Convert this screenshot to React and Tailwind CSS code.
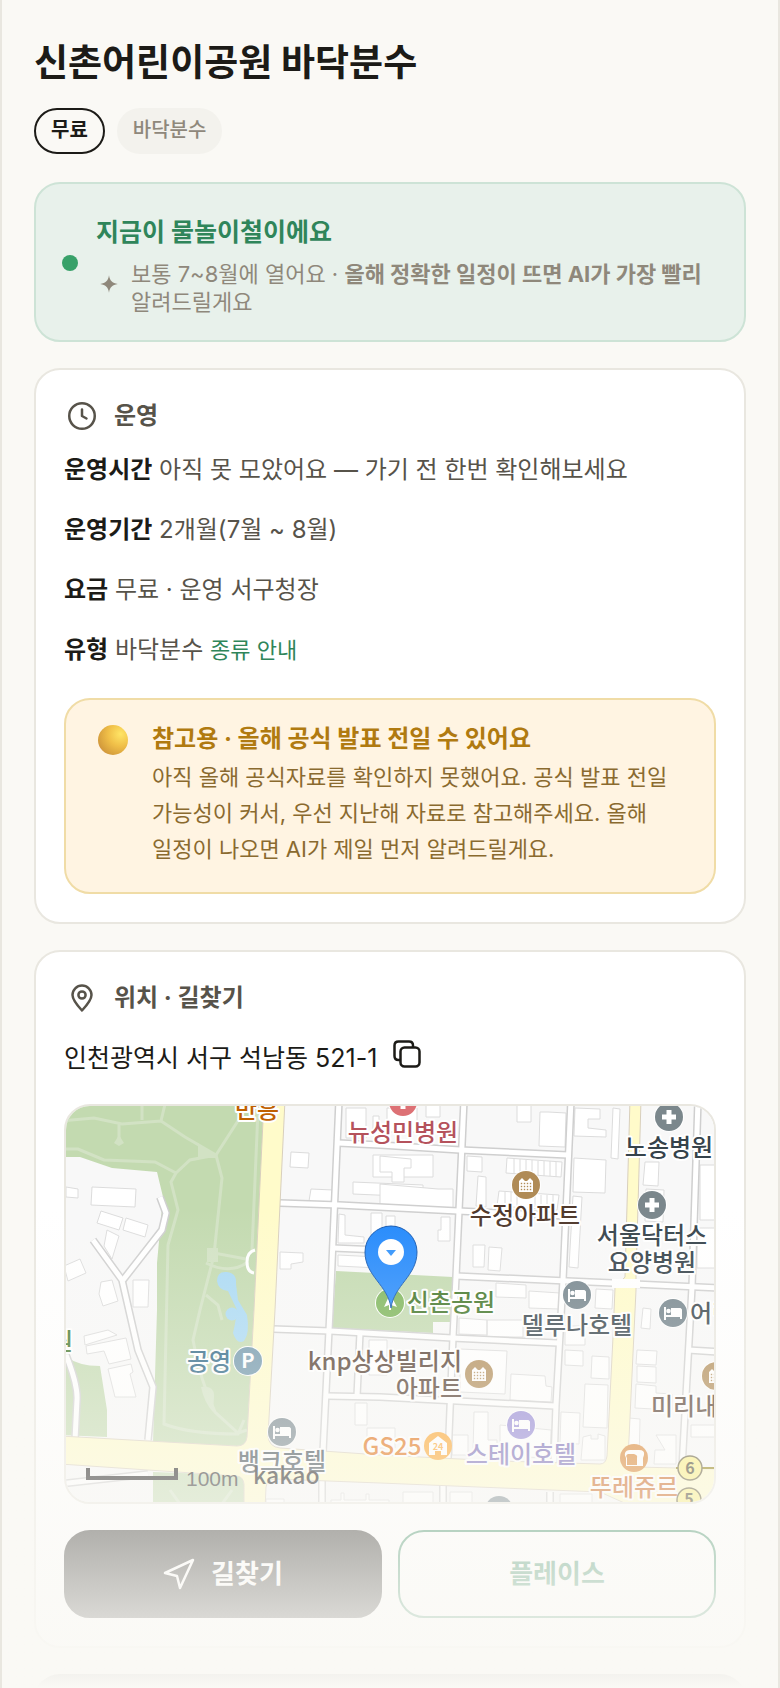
import React from "react";

const HOSPITAL = "#7b878c";
const HOTEL = "#74848c";
const HOUSE = "#b08b56";

function Halo({ x, y, fill, size = 24, anchor = "middle", children }) {
  return (
    <text
      x={x}
      y={y}
      fill={fill}
      fontSize={size}
      fontWeight="500"
      textAnchor={anchor}
      stroke="#ffffff"
      strokeWidth="4"
      strokeLinejoin="round"
      paintOrder="stroke"
    >
      {children}
    </text>
  );
}

function Cross({ x, y, fill }) {
  return (
    <g transform={`translate(${x} ${y})`}>
      <circle r="15" fill="#fff" />
      <circle r="14" fill={fill} />
      <path d="M-2.5-7h5v4.500h4.500v5h-4.500v4.500h-5v-4.500h-4.500v-5h4.500z" fill="#fff" />
    </g>
  );
}

function Bed({ x, y, fill }) {
  return (
    <g transform={`translate(${x} ${y})`}>
      <circle r="15" fill="#fff" />
      <circle r="14" fill={fill} />
      <path d="M-9-6h2v8H7v-5H-2v-2H6q3 0 3 3v8H7V4H-7v3h-2z" fill="#fff" />
      <path d="M-2-5H6q3 0 3 3v4H-2z" fill="#fff" />
      <circle cx="-4.500" cy="-2" r="2.300" fill="#fff" />
    </g>
  );
}

function Apartment({ x, y, fill = HOUSE }) {
  const dots = [-4.500, -1.500, 1.500, 4.500];
  return (
    <g transform={`translate(${x} ${y})`}>
      <circle r="15" fill="#fff" />
      <circle r="14" fill={fill} />
      <path d="M-7 7V-4l3-3 3 3h2l3-3 3 3V7z" fill="#fff" />
      {dots.map((cx) =>
        [-1.500, 1.500, 4.500].map((cy) => (
          <rect key={`${cx}${cy}`} x={cx - 0.700} y={cy - 0.700} width="1.400" height="1.400" fill={fill} />
        ))
      )}
    </g>
  );
}

const minorRoads = [
  "M339 1100L330 1310L323 1452",
  "M464 1100L456 1277L453 1337L448 1458",
  "M571 1100L563 1280L556 1405L554 1462",
  "M698 1100L692 1287L682 1468",
  "M280 1203L339 1205L458 1211L566 1216",
  "M338 1143L380 1145L460 1150L568 1155",
  "M333 1248L380 1250",
  "M456 1276L567 1281L613 1283L720 1288",
  "M273 1329L330 1331L452 1338L558 1343",
  "M327 1396L380 1397L555 1406",
  "M360 1333L357 1396",
  "M688 1350L720 1352",
  "M160 1197L166 1213L162 1230L123 1280",
  "M93 1240L122 1280L138 1350L153 1387L148 1440",
  "M66 1355Q78 1385 77 1400L75 1440",
  "M322 1480V1510M443 1485V1510M550 1492V1510",
  "M60 1484L148 1474",
];

const buildings = [
  "M92 1187l44 2-1 18-44-2zM101 1211l22 7-4 12-22-7zM126 1218l22 7-3 12-22-7zM107 1230l12 6-7 23-8-13zM66 1187l12 2-0 9-12-1zM64 1266l16-7 6 14-18 8z",
  "M133 1280h16l-1 27h-15zM101 1282l11-2 6 21-15 5-4-12zM84 1336l24-6 9 5-32 10zM86 1346l40-8 5 21-22 5-5-13-17 3zM108 1369l23-5 2 8-3 2 6 23-21 0z",
  "M291 1152l18 1-1 15-18-1zM311 1189l22 1-2 13-22-2zM280 1252l23 1v9l-12 2v5h-11z",
  "M373 1155h60v22h-60zM353 1182l70 3v12l-70-3zM339 1214l6 1v20l19 2v6h-26zM338 1255l40 2v11l-40-2zM371 1213h11v24h-11zM386 1216h9v22h-9z",
  "M346 1108h20v30h-20zM373 1116h6v20h-6zM387 1108h30v24h-30zM426 1102h14v15h-14zM517 1102h14v20h-14zM548 1112l18 1-1 34-26-1 1-34z",
  "M380 1156l31 3v9h-7v14h-12v-10h-12zM380 1184l58 5h15v22l-60-3-13-2zM467 1156l15 1v15l-15-1zM478 1176l8 1v30l-10-1zM441 1217h9v24h-12v-11h3z",
  "M473 1245h12l-1 22h-11zM489 1247l13 1-2 23-12-1zM573 1196l9 1-4 71-9-1zM574 1158l32 2-1 33-32-1zM575 1108l25 1v10h-12v9l18 2v7l-32-1z",
  "M613 1108l7 1-2 50-7-1zM645 1162h14l-1 24-15-1zM646 1189l18 1-1 32-18-1zM700 1165h20v55h-20zM697 1228h20v40h-20z",
  "M459 1318l28 2v15l-28-1zM487 1320h36v17h-36zM496 1283l30 2v13l-30-1zM529 1291l31 2-1 16-30-1zM596 1289l17 1-1 19-17-1zM643 1308l8 1-1 20-9-1z",
  "M460 1349l47 2-2 43-45-2zM511 1374l34 2 1 10 6 1-1 15-41-2zM565 1326h20v19h-20zM565 1350l18 1v15l-18-1zM592 1356l17 1v22l-18-1zM585 1384l23 1-1 43-24-1z",
  "M637 1350l20 1-1 14-20-1zM637 1366l19 1v16l-19-1zM636 1384l20 2v7l16 1v16l-37-2zM629 1418l11 1-1 42-11-1zM656 1435h20v29h-22l1-14h10zM691 1425h25v12h-25z",
  "M561 1412l19 1-1 31-19-1zM474 1412h14v28h9v14l-24-1zM500 1425l51 5-1 28-50-2zM369 1340h18v35h-18zM355 1403h12v22h-12zM367 1428h28v20h-28zM452 1435h16v20h-16zM583 1437l8-2v4h7v-5l7 2v24h-24z",
  "M403 1492h30v14h-30zM450 1492h22v14h-22zM560 1494h32v14h-32zM266 1499h18v10h-18zM331 1500h10v-7h3v7h22v-6h3v6h20v9h-58z",
  "M507 1158l55 4-1 15-55-4zM499 1191l60 4-2 15-60-4z",
];

function MapPicture() {
  return (
    <svg
      viewBox="66 1106 648 396"
      preserveAspectRatio="xMidYMid slice"
      className="block w-full font-['Noto_Sans_CJK_KR',sans-serif]"
      role="img"
      aria-label="신촌어린이공원 지도"
    >
      <rect x="60" y="1100" width="660" height="410" fill="#f8f8f8" />
      <g fill="#c3dab0">
        <path d="M60 1100H264L254 1310L247 1437Q246 1446 237 1446L153 1442L157 1310V1263L163 1197L157 1172L112 1168L80 1157H60z" />
        <path d="M60 1350Q72 1366 100 1366L107 1410V1437L60 1435z" />
        <path d="M153 1472L236 1475Q244 1476 244 1484V1510H153z" />
        <path d="M336 1271L453 1277L450 1322H433V1333L332 1328z" />
      </g>
      <g fill="none" stroke="#d2e2c4" strokeWidth="3">
        <path d="M60 1121L94 1118L122 1124L161 1121L185 1137L216 1155L243 1113M142 1100V1120M166 1100L161 1121M119 1124V1142" />
        <path d="M60 1149H78L104 1160L155 1162L176 1173L190 1160L216 1155L222 1178L214 1255L200 1310L193 1340Q200 1380 215 1412L238 1433L247 1430M176 1173L171 1182L178 1210L168 1245L164 1424Q190 1434 238 1434L244 1420" />
        <path d="M214 1253L246 1259M206 1263Q230 1275 248 1262M258 1110L252 1250M206 1295L218 1305L222 1320M170 1490L180 1504M232 1490L222 1504" />
      </g>
      <g fill="#d2e2c4">
        <path d="M198 1143L217 1158H198zM207 1248h11v14h-11zM119 1135l5 8-5 3-5-3zM201 1387q14-2 13 10l-1 15q-9-10-12-25z" />
      </g>
      <g fill="#a9d9f4">
        <path d="M217 1281Q217 1271 227 1272Q237 1273 236 1284L238 1300L247 1315Q250 1333 244 1341Q237 1345 233 1333Q236 1320 237 1310L228 1291Q218 1290 217 1281z" />
        <circle cx="232" cy="1314" r="6.500" />
      </g>
      <g fill="#ffffff" stroke="#dcdcdc" strokeWidth="1">
        {buildings.map((d) => (
          <path key={d} d={d} />
        ))}
      </g>
      <path
        d="M514 1159v15M520 1159v15M526 1160v15M532 1160v15M538 1161v15M544 1161v15M550 1161v15M556 1162v15M505 1192v13M511 1192v13M517 1193v13M535 1194v13M541 1195v13M547 1195v13M553 1195v13"
        stroke="#dcdcdc"
      />
      <g fill="none" strokeLinejoin="round">
        {minorRoads.map((d) => (
          <path key={d} d={d} stroke="#cfcfcf" strokeWidth="8" />
        ))}
        {minorRoads.map((d) => (
          <path key={d} d={d} stroke="#ffffff" strokeWidth="5" />
        ))}
      </g>
      <path d="M255 1250Q247 1252 247 1262T254 1273" fill="none" stroke="#fff" strokeWidth="3" />
      <g fill="#fffbca" stroke="#d8cfbd" strokeWidth="1">
        <path d="M264 1100H285L275 1310L268 1436Q269 1447 280 1448L380 1455L500 1461L600 1464Q606 1464 607 1456L613 1337L615 1288L625 1277L630 1100H641L636 1277V1290L628 1460Q629 1466 636 1467L720 1469V1510H640L600 1492L380 1483L276 1479Q267 1479 266 1487L265 1510H244V1484Q243 1476 236 1476L60 1464V1436L237 1446Q246 1446 247 1437L254 1310z" />
      </g>
      <path d="M676 1468H720" stroke="#887700" strokeWidth="2" />
      <path d="M612 1279h28v9h-28z" fill="#fff" />

      <Cross x={403} y={1102} fill="#dd7175" />
      <Cross x={669} y={1117} fill={HOSPITAL} />
      <Cross x={652} y={1205} fill={HOSPITAL} />
      <Apartment x={526} y={1185} />
      <Apartment x={479} y={1374} />
      <Apartment x={716} y={1376} />
      <Bed x={577} y={1295} fill={HOTEL} />
      <Bed x={673} y={1313} fill={HOTEL} />
      <Bed x={282} y={1432} fill={HOTEL} />
      <Bed x={521} y={1425} fill="#9285d5" />
      <circle cx="499" cy="1510" r="14" fill={HOTEL} />

      <circle cx="248" cy="1361" r="15" fill="#fff" />
      <circle cx="248" cy="1361" r="14" fill="#6e95aa" />
      <text x="248" y="1368" fontSize="20" fontWeight="700" fill="#fff" textAnchor="middle">P</text>

      <circle cx="438" cy="1446" r="14" fill="#fca123" />
      <path d="M429 1455V1443L438 1436L447 1443V1455H441V1451H435V1455z" fill="#fff" />
      <text x="438" y="1450" fontSize="9" fontWeight="700" fill="#fca123" textAnchor="middle">24</text>

      <circle cx="634" cy="1458" r="14" fill="#d77c23" />
      <path d="M630 1450h9q6 0 5 5l-1 3v8h-17v-8q-2-3-1-5 1-3 5-3z" fill="#fff" />
      <path d="M628 1454h6q4 1 3 4v7h-10v-7q-2-3 1-4z" fill="#d77c23" />

      <circle cx="390" cy="1303" r="15" fill="#fff" />
      <circle cx="390" cy="1303" r="14" fill="#7db55a" />
      <path d="M384 1307L390 1294L397 1307L391 1305V1310H389V1305z" fill="#fff" />

      <Halo x={257} y={1118} fill="#c06000">반흥</Halo>
      <Halo x={403} y={1141} fill="#b5525c">뉴성민병원</Halo>
      <Halo x={669} y={1156} fill="#36434b">노송병원</Halo>
      <Halo x={525} y={1224} fill="#4f382b">수정아파트</Halo>
      <Halo x={652} y={1244} fill="#36434b">서울닥터스</Halo>
      <Halo x={652} y={1271} fill="#36434b">요양병원</Halo>
      <Halo x={451} y={1311} fill="#3f7426">신촌공원</Halo>
      <Halo x={577} y={1334} fill="#36434b">델루나호텔</Halo>
      <Halo x={690} y={1322} fill="#36434b" anchor="start">어린이집</Halo>
      <Halo x={73} y={1350} fill="#3f7426" anchor="end">공원</Halo>
      <Halo x={209} y={1370} fill="#266182">공영</Halo>
      <Halo x={462} y={1370} fill="#4f382b" anchor="end">knp상상빌리지</Halo>
      <Halo x={462} y={1397} fill="#4f382b" anchor="end">아파트</Halo>
      <Halo x={651} y={1415} fill="#4f382b" anchor="start">미리내아파트</Halo>
      <Halo x={282} y={1470} fill="#36434b">뱅크호텔</Halo>
      <Halo x={392} y={1455} fill="#e06a08">GS25</Halo>
      <Halo x={521} y={1463} fill="#7365b5">스테이호텔</Halo>
      <Halo x={634} y={1496} fill="#c85c10">뚜레쥬르</Halo>

      <g fill="#fbef7c" stroke="#5c5430" strokeWidth="1.500">
        <circle cx="690" cy="1468" r="12" />
        <circle cx="689" cy="1500" r="12" />
      </g>
      <g fontSize="16" fontWeight="700" fill="#3a3418" textAnchor="middle">
        <text x="690" y="1474">6</text>
        <text x="689" y="1505">5</text>
      </g>

      <path
        d="M391 1308C388 1285 365 1276 365 1252A26 26 0 0 1 417 1252C417 1276 394 1285 391 1308z"
        fill="#2389fc"
        stroke="#1257b0"
        strokeWidth="1"
      />
      <circle cx="391" cy="1252" r="13" fill="#fff" />
      <path d="M386 1250H396L391 1256z" fill="#2f92fc" />

      <path d="M88 1468V1478H176V1468" fill="none" stroke="#111" strokeWidth="4" />
      <text x="186" y="1486" fontSize="21" fill="#222" fontFamily="Liberation Sans, sans-serif">100m</text>
      <text x="253" y="1484" fontSize="23" fontWeight="500" fill="#111">kakao</text>
    </svg>
  );
}

function SectionTitle({ icon, children }) {
  return (
    <h2 className="flex items-center gap-[14px] text-2xl leading-9 font-bold text-[#57534a]">
      <span className="flex w-9 justify-center">{icon}</span>
      {children}
    </h2>
  );
}

function Fact({ label, children }) {
  return (
    <p className="text-[#57534a]">
      <b className="font-bold text-[#1c1b17]">{label}</b> {children}
    </p>
  );
}

const card = "rounded-[26px] border-2 border-[#e9e7e0] bg-white p-7";

export default function App() {
  return (
    <div className="relative mx-auto h-screen max-w-[780px] overflow-hidden border-x-2 border-[#e9e7e0] bg-[#faf9f5] px-8 pt-9 font-[Inter,'Noto_Sans_CJK_KR',sans-serif] break-keep text-[#1c1b17]">
      <header>
        <h1 className="text-[37px] leading-[54px] font-bold">신촌어린이공원 바닥분수</h1>
        <div className="mt-[18px] flex gap-3 text-xl leading-6 font-medium">
          <span className="rounded-full border-2 border-[#1c1b17] px-[15px] pt-2 pb-[10px] font-bold">무료</span>
          <span className="rounded-full border-2 border-[#f3f2ed] bg-[#f3f2ed] px-[14px] pt-2 pb-[10px] text-[#8f887b]">바닥분수</span>
        </div>
      </header>

      <main className="mt-7 flex flex-col gap-[26px]">
        <section className="flex items-center gap-[18px] rounded-[26px] border-2 border-[#cde3d6] bg-[#e8f1eb] px-[26px] pt-[26px] pb-6">
          <span className="size-4 shrink-0 rounded-full bg-[#38a169]" />
          <div className="flex-1">
            <h2 className="text-[25px] leading-[44px] font-bold text-[#2f855a]">지금이 물놀이철이에요</h2>
            <div className="mt-[6px] flex items-center gap-3">
              <svg viewBox="0 0 16 16" className="mb-2 ml-[3px] size-5 shrink-0 fill-[#8f887b]" aria-hidden="true">
                <path d="M8 1C8.700 5.500 10.500 7.200 15 8C10.500 8.800 8.700 10.500 8 15C7.300 10.500 5.500 8.800 1 8C5.500 7.200 7.300 5.500 8 1z" />
              </svg>
              <p className="text-[22px] leading-7 text-[#8f887b]">
                보통 7~8월에 열어요 · <b className="font-bold">올해 정확한 일정이 뜨면 AI가 가장 빨리</b> 알려드릴게요
              </p>
            </div>
          </div>
        </section>

        <section className={card}>
          <SectionTitle
            icon={
              <svg viewBox="0 0 28 28" className="size-7 fill-none stroke-[#57534a] stroke-[2.5]" strokeLinecap="round" strokeLinejoin="round" aria-hidden="true">
                <circle cx="14" cy="14" r="12.750" />
                <path d="M14 7.500V14L18.500 16.500" />
              </svg>
            }
          >
            운영
          </SectionTitle>
          <div className="mt-4 flex flex-col gap-5 text-2xl leading-10">
            <Fact label="운영시간">아직 못 모았어요 — 가기 전 한번 확인해보세요</Fact>
            <Fact label="운영기간">2개월(7월 ~ 8월)</Fact>
            <Fact label="요금">무료 · 운영 서구청장</Fact>
            <Fact label="유형">
              바닥분수 <a href="#types" className="text-[22px] text-[#2f855a]">종류 안내</a>
            </Fact>
          </div>
          <aside className="mt-7 flex items-start gap-[24px] rounded-[26px] border-2 border-[#f0dca6] bg-[#fff4e2] pt-[21px] pr-9 pb-[25px] pl-8">
            <span className="mt-1 size-[30px] shrink-0 rounded-full bg-[radial-gradient(circle_at_75%_30%,#ffe566,#f0bf48_40%,#d49c3c_75%,#cf7a62)]" />
            <div>
              <h3 className="text-2xl leading-9 font-bold text-[#b07a10]">참고용 · 올해 공식 발표 전일 수 있어요</h3>
              <p className="mt-[2px] text-[22px] leading-9 text-[#8a6a2f]">
                아직 올해 공식자료를 확인하지 못했어요. 공식 발표 전일 가능성이 커서, 우선 지난해 자료로 참고해주세요. 올해 일정이 나오면 AI가 제일 먼저 알려드릴게요.
              </p>
            </div>
          </aside>
        </section>

        <section className={card}>
          <SectionTitle
            icon={
              <svg viewBox="0 0 28 28" className="size-7 fill-none stroke-[#57534a] stroke-[2.5]" strokeLinejoin="round" aria-hidden="true">
                <path d="M14 26.500C8 20 4.500 15.500 4.500 11A9.500 9.500 0 0 1 23.500 11C23.500 15.500 20 20 14 26.500z" />
                <circle cx="14" cy="11" r="3.600" />
              </svg>
            }
          >
            위치 · 길찾기
          </SectionTitle>
          <div className="mt-[22px] flex items-center gap-4">
            <p className="text-[25px] leading-10">인천광역시 서구 석남동 521-1</p>
            <button type="button" aria-label="주소 복사" className="pb-2">
              <svg viewBox="0 0 28 28" className="size-7 fill-none stroke-[#1c1b17] stroke-[2.5]" strokeLinejoin="round" aria-hidden="true">
                <rect x="7.500" y="7.500" width="19" height="19" rx="4" />
                <path d="M7.500 20H5.500Q1.500 20 1.500 16V5.500Q1.500 1.500 5.500 1.500H16Q20 1.500 20 5.500V7.500" />
              </svg>
            </button>
          </div>
          <div className="mt-[26px] overflow-hidden rounded-[26px] border-2 border-[#e9e7e0]">
            <MapPicture />
          </div>
          <div className="mt-[26px] flex gap-4 text-[26px] leading-10 font-bold">
            <button type="button" className="flex flex-1 items-center justify-center gap-4 rounded-[26px] border-2 border-[#1c1b17] bg-[#1c1b17] py-[22px] text-white">
              <svg viewBox="0 0 32 32" className="size-8 fill-none stroke-white stroke-[2.5]" strokeLinejoin="round" aria-hidden="true">
                <path d="M30 2L17 30L14 18L2 15z" />
              </svg>
              길찾기
            </button>
            <button type="button" className="flex-1 rounded-[26px] border-2 border-[#2f855a] bg-white py-[22px] text-[#2f855a]">플레이스</button>
          </div>
        </section>

        <div className="h-24 shrink-0 rounded-[26px] bg-[#1c1b17]" />
      </main>

      <div className="pointer-events-none absolute -inset-x-[2px] bottom-0 h-[480px] bg-linear-to-b from-[#faf9f5]/0 to-[#faf9f5]" />
    </div>
  );
}
